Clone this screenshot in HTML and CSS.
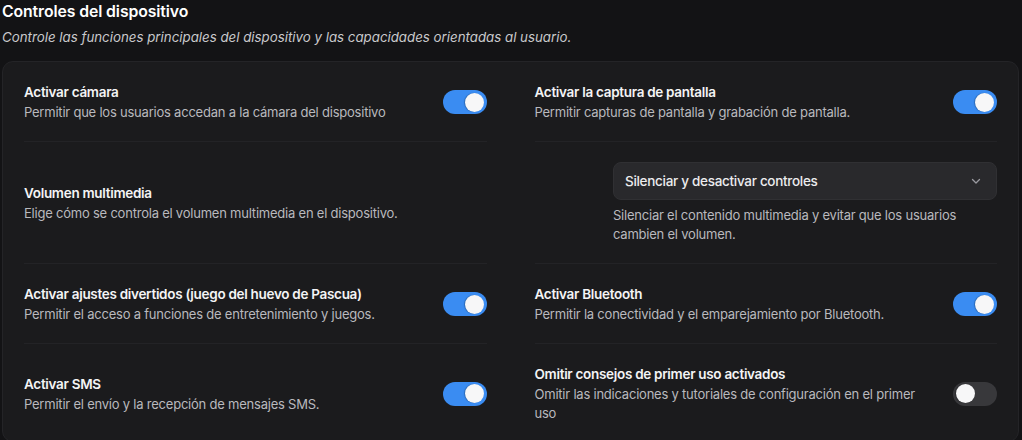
FILE: index.html
```html
<!DOCTYPE html>
<html lang="es">
<head>
<meta charset="utf-8">
<title>Controles del dispositivo</title>
<link rel="stylesheet" href="styles.css">
</head>
<body>
<section class="panel">
  <header class="panel-head">
    <h2 class="panel-title">Controles del dispositivo</h2>
    <p class="panel-sub">Controle las funciones principales del dispositivo y las capacidades orientadas al usuario.</p>
  </header>

  <div class="card">
    <div class="cell">
      <div class="text">
        <div class="label">Activar cámara</div>
        <div class="desc">Permitir que los usuarios accedan a la cámara del dispositivo</div>
      </div>
      <span class="toggle on"><span class="knob"></span></span>
    </div>
    <div class="cell">
      <div class="text">
        <div class="label">Activar la captura de pantalla</div>
        <div class="desc">Permitir capturas de pantalla y grabación de pantalla.</div>
      </div>
      <span class="toggle on"><span class="knob"></span></span>
    </div>

    <div class="cell">
      <div class="text">
        <div class="label">Volumen multimedia</div>
        <div class="desc">Elige cómo se controla el volumen multimedia en el dispositivo.</div>
      </div>
    </div>
    <div class="cell cell-select">
      <div class="select-block">
        <div class="select">
          <span>Silenciar y desactivar controles</span>
          <svg class="chev" width="12" height="12" viewBox="0 0 12 12" fill="none"><path d="M2.5 4.5L6 8l3.5-3.5" stroke="#9a9aa0" stroke-width="1.3" stroke-linecap="round" stroke-linejoin="round"/></svg>
        </div>
        <div class="desc">Silenciar el contenido multimedia y evitar que los usuarios cambien el volumen.</div>
      </div>
    </div>

    <div class="cell">
      <div class="text">
        <div class="label">Activar ajustes divertidos (juego del huevo de Pascua)</div>
        <div class="desc">Permitir el acceso a funciones de entretenimiento y juegos.</div>
      </div>
      <span class="toggle on"><span class="knob"></span></span>
    </div>
    <div class="cell">
      <div class="text">
        <div class="label">Activar Bluetooth</div>
        <div class="desc">Permitir la conectividad y el emparejamiento por Bluetooth.</div>
      </div>
      <span class="toggle on"><span class="knob"></span></span>
    </div>

    <div class="cell last">
      <div class="text">
        <div class="label">Activar SMS</div>
        <div class="desc">Permitir el envío y la recepción de mensajes SMS.</div>
      </div>
      <span class="toggle on"><span class="knob"></span></span>
    </div>
    <div class="cell last">
      <div class="text narrow">
        <div class="label">Omitir consejos de primer uso activados</div>
        <div class="desc">Omitir las indicaciones y tutoriales de configuración en el primer uso</div>
      </div>
      <span class="toggle"><span class="knob"></span></span>
    </div>
  </div>
</section>
</body>
</html>
```

FILE: styles.css
```css
* { box-sizing: border-box; }

html, body {
  margin: 0;
  background: #131315;
}

body {
  font-family: Inter, "Noto Sans", sans-serif;
  color: #f2f2f3;
  padding: 0 3px 0 2px;
}

.panel-head {
  padding-top: 2px;
}

.panel-title {
  margin: 0;
  font-size: 15.8px;
  font-weight: 600;
  line-height: 20px;
  letter-spacing: -0.1px;
  color: #ffffff;
}

.panel-sub {
  margin: 5px 0 0;
  font-size: 13.3px;
  font-style: italic;
  line-height: 20px;
  color: #c9c9cc;
}

.card {
  margin-top: 14px;
  background: #1b1b1d;
  border: 1px solid #242427;
  border-radius: 11px;
  padding: 0 21px;
  display: grid;
  grid-template-columns: 1fr 1fr;
  column-gap: 48px;
}

.cell {
  display: flex;
  align-items: center;
  gap: 24px;
  padding: 20px 0 19px;
  border-bottom: 1px solid #232326;
}

.cell.last {
  border-bottom: none;
  padding-bottom: 18px;
}

.text {
  flex: 1;
  min-width: 0;
}

.text.narrow {
  padding-right: 8px;
}

.label {
  font-size: 13.5px;
  font-weight: 600;
  line-height: 20px;
  letter-spacing: -0.3px;
  color: #f4f4f5;
}

.desc {
  font-size: 13px;
  line-height: 19px;
  letter-spacing: -0.22px;
  color: #b9b9bd;
  margin-top: 1px;
}

.cell-select {
  justify-content: flex-end;
}

.select-block {
  width: 384px;
}

.select {
  height: 38px;
  display: flex;
  align-items: center;
  justify-content: space-between;
  padding: 0 14px 0 11px;
  background: #29292c;
  border: 1px solid #303033;
  border-radius: 8px;
  font-size: 13.5px;
  font-weight: 500;
  letter-spacing: -0.3px;
  color: #ececee;
}

.select-block .desc {
  margin-top: 6px;
}

.toggle {
  flex: none;
  width: 44px;
  height: 24px;
  border-radius: 12px;
  background: #38383b;
  display: flex;
  align-items: center;
  padding: 0 3px;
}

.toggle.on {
  background: #3a8cf2;
  justify-content: flex-end;
}

.knob {
  width: 19px;
  height: 19px;
  border-radius: 50%;
  background: #f7f7f8;
  box-shadow: -1px 0 1px rgba(0, 0, 0, 0.25);
}
```
